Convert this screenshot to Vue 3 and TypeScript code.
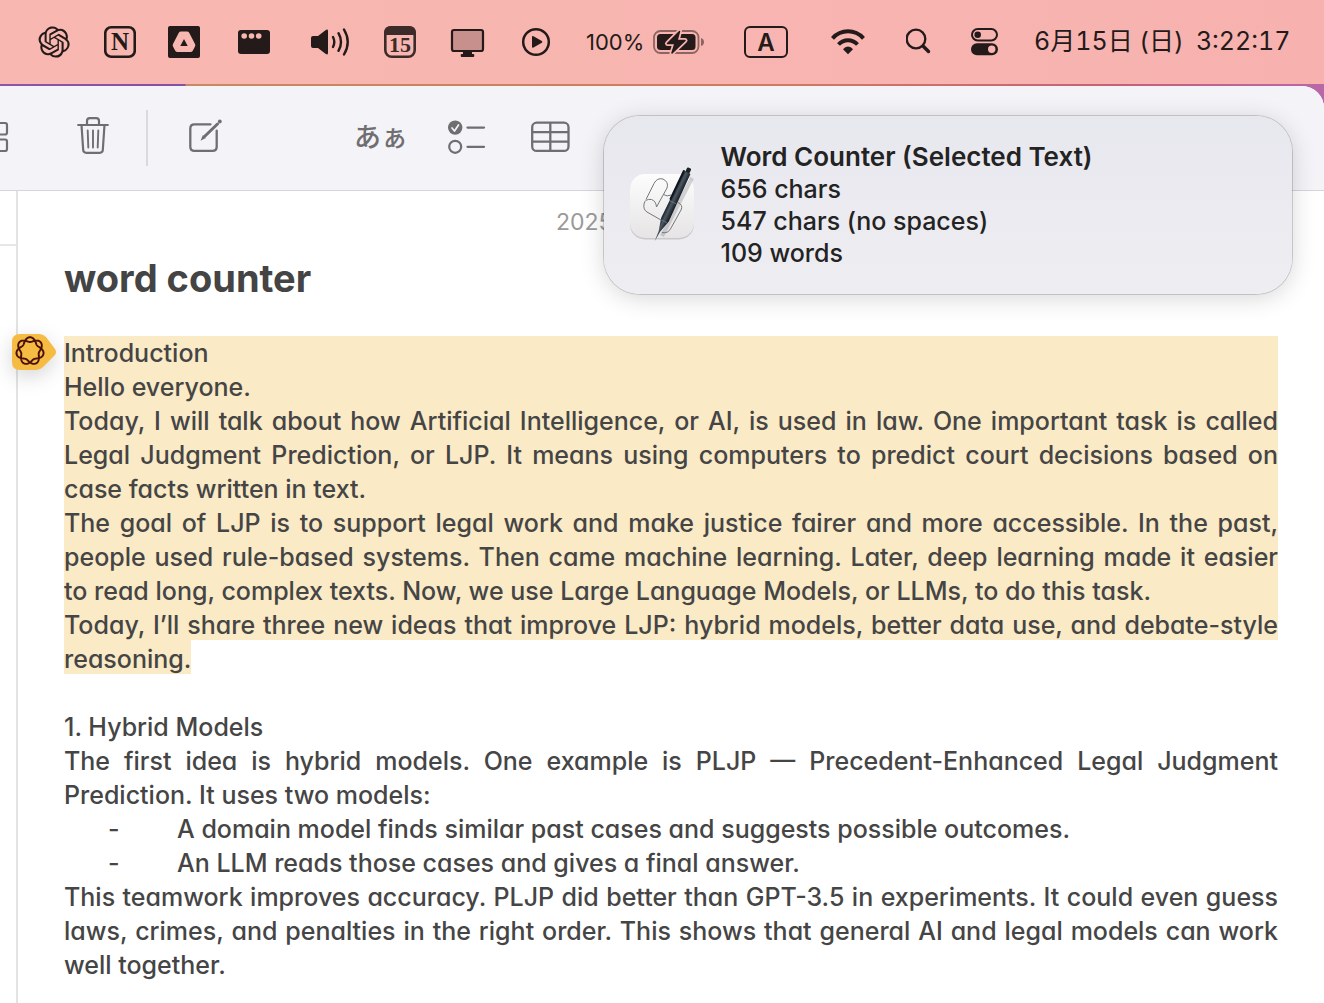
<script setup lang="ts">
interface Stat {
  value: number
  unit: string
}

const stats: Stat[] = [
  { value: 656, unit: 'chars' },
  { value: 547, unit: 'chars (no spaces)' },
  { value: 109, unit: 'words' },
]

const intro: string[] = [
  'Introduction',
  'Hello everyone.',
  'Today, I will talk about how Artificial Intelligence, or AI, is used in law. One important task is called Legal Judgment Prediction, or LJP. It means using computers to predict court decisions based on case facts written in text.',
  'The goal of LJP is to support legal work and make justice fairer and more accessible. In the past, people used rule-based systems. Then came machine learning. Later, deep learning made it easier to\u00a0read long, complex texts. Now, we use Large Language Models, or LLMs, to do this task.',
]

const points: string[] = [
  'A domain model finds similar past cases and suggests possible outcomes.',
  'An LLM reads those cases and gives a final answer.',
]

// Seven-lobed closed curve that winds twice round its centre.
function rosette(cx: number, cy: number, base: number, swing: number): string {
  const steps = 280
  const pts: string[] = []
  for (let i = 0; i < steps; i++) {
    const t = (i / steps) * Math.PI * 4
    const r = base + swing * Math.cos(3.5 * t)
    pts.push(`${(cx + r * Math.sin(t)).toFixed(2)} ${(cy - r * Math.cos(t)).toFixed(2)}`)
  }
  return `M${pts.join('L')}Z`
}

const rosettePath = rosette(18, 17, 11.4, 2.4)
</script>

<template>
  <div class="desktop">
    <header class="menubar">
      <button type="button" aria-label="ChatGPT">
        <svg width="34" height="36" viewBox="38 24 34 36">
          <g transform="translate(38.5 26.4) scale(1.3)">
            <path fill="#231a19" d="M22.2819 9.8211a5.9847 5.9847 0 0 0-.5157-4.9108 6.0462 6.0462 0 0 0-6.5098-2.9A6.0651 6.0651 0 0 0 4.9807 4.1818a5.9847 5.9847 0 0 0-3.9977 2.9 6.0462 6.0462 0 0 0 .7427 7.0966 5.98 5.98 0 0 0 .511 4.9107 6.051 6.051 0 0 0 6.5146 2.9001A5.9847 5.9847 0 0 0 13.2599 24a6.0557 6.0557 0 0 0 5.7718-4.2058 5.9894 5.9894 0 0 0 3.9977-2.9001 6.0557 6.0557 0 0 0-.7475-7.0729zm-9.022 12.6081a4.4755 4.4755 0 0 1-2.8764-1.0408l.1419-.0804 4.7783-2.7582a.7948.7948 0 0 0 .3927-.6813v-6.7369l2.02 1.1686a.071.071 0 0 1 .038.0521v5.5826a4.504 4.504 0 0 1-4.4945 4.4944zm-9.6607-4.1254a4.4708 4.4708 0 0 1-.5346-3.0137l.142.0852 4.783 2.7582a.7712.7712 0 0 0 .7806 0l5.8428-3.3685v2.3324a.0804.0804 0 0 1-.0332.0615L9.74 19.9502a4.4992 4.4992 0 0 1-6.1408-1.6464zM2.3408 7.8956a4.485 4.485 0 0 1 2.3655-1.9728V11.6a.7664.7664 0 0 0 .3879.6765l5.8144 3.3543-2.0201 1.1685a.0757.0757 0 0 1-.071 0l-4.8303-2.7865A4.504 4.504 0 0 1 2.3408 7.872zm16.5963 3.8558L13.1038 8.364 15.1192 7.2a.0757.0757 0 0 1 .071 0l4.8303 2.7913a4.4944 4.4944 0 0 1-.6765 8.1042v-5.6772a.79.79 0 0 0-.407-.667zm2.0107-3.0231l-.142-.0852-4.7735-2.7818a.7759.7759 0 0 0-.7854 0L9.409 9.2297V6.8974a.0662.0662 0 0 1 .0284-.0615l4.8303-2.7866a4.4992 4.4992 0 0 1 6.6802 4.66zM8.3065 12.863l-2.02-1.1638a.0804.0804 0 0 1-.038-.0567V6.0742a4.4992 4.4992 0 0 1 7.3757-3.4537l-.142.0805L8.704 5.459a.7948.7948 0 0 0-.3927.6813zm1.0976-2.3654l2.602-1.4998 2.6069 1.4998v2.9994l-2.5974 1.4997-2.6067-1.4997Z" />
          </g>
        </svg>
      </button>
      <button type="button" aria-label="Notion">
        <svg width="32" height="36" viewBox="104 24 32 36">
          <rect x="105.25" y="27.25" width="29.5" height="29.5" rx="6" fill="none" stroke="#231a19" stroke-width="2.6" />
          <text class="serif" x="120" y="50" font-size="25" text-anchor="middle" fill="#231a19">N</text>
        </svg>
      </button>
      <button type="button" aria-label="Google Drive">
        <svg width="32" height="36" viewBox="168 24 32 36">
          <path fill="#231a19" fill-rule="evenodd" d="M170 26h28a2 2 0 0 1 2 2v28a2 2 0 0 1-2 2h-28a2 2 0 0 1-2-2v-28a2 2 0 0 1 2-2ZM181 31.500h6q1.500 0 2.200 1.200L195 44q.6 1.200 0 2.400L192.600 51q-.7 1-2 1H177.400q-1.300 0-2-1L173 46.400q-.6-1.200 0-2.400L178.800 32.700q.7-1.200 2.200-1.200ZM184 39L180.300 46L187.700 46Z" />
        </svg>
      </button>
      <button type="button" aria-label="Window strip">
        <svg width="44" height="36" viewBox="232 24 44 36">
          <rect x="238" y="30" width="32" height="24" rx="3" fill="#231a19" />
          <circle cx="244.200" cy="36" r="2.800" fill="#f8b6b0" />
          <circle cx="251.500" cy="36" r="2.800" fill="#f8b6b0" />
          <circle cx="258.700" cy="36" r="2.800" fill="#f8b6b0" />
        </svg>
      </button>
      <button type="button" aria-label="Volume">
        <svg width="44" height="36" viewBox="308 24 44 36">
          <path fill="#231a19" d="M313 36h5l7.500-5.800q2.500-1.500 2.500.8v22q0 2.300-2.500.8L318 48h-5q-2 0-2-2v-8q0-2 2-2Z" />
          <g fill="none" stroke="#231a19" stroke-width="2.400" stroke-linecap="round">
            <path d="M333 37q2.600 5 0 10M338.500 33.200q5 8.800 0 17.600M344 29.500q7.500 12.500 0 25" />
          </g>
        </svg>
      </button>
      <button type="button" aria-label="Calendar">
        <svg width="32" height="36" viewBox="384 24 32 36">
          <rect x="385.300" y="27.300" width="29.400" height="29.400" rx="6.500" fill="none" stroke="#3c2b29" stroke-width="2.600" />
          <path fill="#3c2b29" d="M384 35v-2q0-7 7-7h18q7 0 7 7v2Z" />
          <text class="serif" x="400" y="52" font-size="22" text-anchor="middle" fill="#3c2b29">15</text>
        </svg>
      </button>
      <button type="button" aria-label="Display">
        <svg width="38" height="36" viewBox="448 24 38 36">
          <rect x="452" y="30" width="31" height="21" rx="2" fill="#c7908c" stroke="#231a19" stroke-width="2.200" />
          <path fill="#231a19" d="M463 51h9v3h1.500q.8.300.8 1.500t-.8 1.500h-12q-.8-.3-.8-1.500t.8-1.500h1.500Z" />
        </svg>
      </button>
      <button type="button" aria-label="Now playing">
        <svg width="36" height="36" viewBox="518 24 36 36">
          <circle cx="536" cy="42" r="12.800" fill="none" stroke="#231a19" stroke-width="2.500" />
          <path fill="#231a19" d="M532 37q0-1.500 1.500-.8l8.300 4.800q1.300.9 0 1.800l-8.300 4.800q-1.500.7-1.500-.8Z" />
        </svg>
      </button>
      <button type="button" class="battery" aria-label="Battery 100%">
        <span>100%</span>
        <svg width="52" height="36" viewBox="653 24 52 36">
          <rect x="654" y="31" width="44.500" height="22" rx="6.500" fill="none" stroke="#8e6461" stroke-width="1.800" />
          <rect x="657" y="34" width="38.500" height="16" rx="3.500" fill="#231a19" />
          <path fill="#8e6461" d="M701 38q3 1 3 4t-3 4Z" />
          <path d="M679.500 31.500L667.500 43.500L675 43.500L672 53L685 40.500L677 40.500Z" fill="#231a19" stroke="#f8b5b0" stroke-width="5" stroke-linejoin="round" />
          <path d="M679.500 31.500L667.500 43.500L675 43.500L672 53L685 40.500L677 40.500Z" fill="#231a19" stroke="#231a19" stroke-width="1.500" stroke-linejoin="round" />
        </svg>
      </button>
      <button type="button" aria-label="Input source">
        <svg width="44" height="36" viewBox="744 24 44 36">
          <rect x="745" y="27" width="42" height="30" rx="5" fill="none" stroke="#231a19" stroke-width="2" />
          <text class="sans" x="766" y="51" font-size="24" text-anchor="middle" fill="#231a19">A</text>
        </svg>
      </button>
      <button type="button" aria-label="Wi-Fi">
        <svg width="54" height="36" viewBox="820 24 54 36">
          <g fill="none" stroke="#231a19" stroke-width="4">
            <path d="M832.500 38.300q6.500-7 15.500-7t15.500 7" />
            <path d="M838.500 44.500q4-4.300 9.500-4.300t9.500 4.300" />
          </g>
          <path fill="#231a19" d="M848 54.200l-5-5q2-2.600 5-2.600t5 2.600Z" />
        </svg>
      </button>
      <button type="button" aria-label="Search">
        <svg width="26" height="36" viewBox="906 24 26 36">
          <circle cx="916" cy="39" r="9.300" fill="none" stroke="#231a19" stroke-width="2.300" />
          <path d="M923 46L928.500 51.500" stroke="#231a19" stroke-width="3.400" stroke-linecap="round" />
        </svg>
      </button>
      <button type="button" aria-label="Control Center">
        <svg width="38" height="36" viewBox="964 24 38 36">
          <rect x="972" y="29" width="25" height="11.500" rx="5.700" fill="none" stroke="#231a19" stroke-width="2" />
          <circle cx="977.700" cy="34.700" r="3.300" fill="#231a19" />
          <rect x="971" y="43.200" width="27" height="12" rx="6" fill="#231a19" />
          <circle cx="991.700" cy="49.200" r="3.700" fill="#f8b4b0" />
        </svg>
      </button>
      <time class="clock"><span>6月15日 (日)</span><span>3:22:17</span></time>
    </header>

    <div class="window">
      <div class="toolbar">
        <div class="tools tools-left">
          <button type="button" aria-label="Gallery view">
            <svg width="10" height="56" viewBox="0 110 10 56">
              <g fill="none" stroke="#6f6e70" stroke-width="2.200">
                <rect x="-8" y="123" width="15" height="11.500" rx="2" />
                <rect x="-8" y="139.500" width="15" height="11.500" rx="2" />
              </g>
            </svg>
          </button>
          <button type="button" aria-label="Delete">
            <svg width="38" height="56" viewBox="74 110 38 56">
              <g fill="none" stroke="#6f6e70" stroke-width="2.200" stroke-linecap="round" stroke-linejoin="round">
                <path d="M78.200 125h29.600M87 124.500v-3.500q0-2.800 2.800-2.800h6.400q2.800 0 2.800 2.800v3.500" />
                <path d="M81.500 125l1.700 25q.2 2.800 3 2.800h13.600q2.800 0 3-2.800l1.700-25" />
                <path stroke-width="1.900" d="M87.700 130.500l.6 17M93 130.500v17M98.300 130.500l-.6 17" />
              </g>
            </svg>
          </button>
        </div>
        <span class="divider"></span>
        <button type="button" aria-label="New note">
          <svg width="40" height="56" viewBox="186 110 40 56">
            <g fill="none" stroke="#6f6e70" stroke-width="2.300" stroke-linecap="round">
              <path d="M210.500 124.300h-16q-4.200 0-4.200 4.200v18.200q0 4.200 4.200 4.200h18q4.200 0 4.200-4.200v-16" />
              <path d="M204.500 136.500l13-12.500" stroke-width="3" />
            </g>
            <path fill="#6f6e70" d="M200.500 140.700l2.400-5.700 3 3Z" />
            <circle cx="219.800" cy="121.500" r="1.900" fill="#6f6e70" />
          </svg>
        </button>
        <div class="tools tools-format">
          <button type="button" class="kana" aria-label="Text format">あぁ</button>
          <button type="button" aria-label="Checklist">
            <svg width="42" height="56" viewBox="446 110 42 56">
              <circle cx="455.200" cy="127.600" r="7.200" fill="#6f6e70" />
              <path d="M452 128l2.500 3 4-6" fill="none" stroke="#f4f3f8" stroke-width="1.700" stroke-linecap="round" stroke-linejoin="round" />
              <circle cx="455.200" cy="146.800" r="6" fill="none" stroke="#6f6e70" stroke-width="2.200" />
              <path d="M467.500 127.600h16.500M467.500 146.800h16.500" stroke="#6f6e70" stroke-width="2.300" stroke-linecap="round" />
            </svg>
          </button>
          <button type="button" aria-label="Table">
            <svg width="42" height="56" viewBox="530 110 42 56">
              <g fill="none" stroke="#6f6e70" stroke-width="2.300">
                <rect x="532.200" y="122.700" width="36.300" height="28.200" rx="4.500" />
                <path d="M550.300 122.700v28.200M532.200 132.200h36.300M532.200 141.700h36.300" />
              </g>
            </svg>
          </button>
        </div>
      </div>

      <div class="panes">
        <aside class="sidebar"><div class="sidebar-head"></div></aside>
        <main class="note">
          <p class="stamp">2025</p>
          <h1>word counter</h1>
          <div class="body">
            <button type="button" class="badge" aria-label="Writing tools">
              <svg width="44" height="36" viewBox="0 0 44 36">
                <path fill="#f5bb42" d="M8 0h19q4 0 7 3l9 12q2 3 0 6l-12 12q-3 3-7 3H8q-8 0-8-8V8q0-8 8-8Z" />
                <path :d="rosettePath" fill="none" stroke="#4a0f07" stroke-width="1.900" stroke-linejoin="round" />
              </svg>
            </button>
            <div class="selected">
              <p v-for="line in intro" :key="line">{{ line }}</p>
            </div>
            <p><mark>Today, I’ll share three new ideas that improve LJP: hybrid models, better data use, and debate-style reasoning.</mark></p>
            <h2>1. Hybrid Models</h2>
            <p>The first idea is hybrid models. One example is PLJP — Precedent-Enhanced Legal Judgment Prediction. It uses two models:</p>
            <ul>
              <li v-for="point in points" :key="point"><span>-</span><span>{{ point }}</span></li>
            </ul>
            <p>This teamwork improves accuracy. PLJP did better than GPT-3.5 in experiments. It could even guess laws, crimes, and penalties in the right order. This shows that general AI and legal models can work well together.</p>
          </div>
        </main>
      </div>
    </div>

    <section class="notification" role="status">
      <svg width="68" height="80" viewBox="628 164 68 80">
        <defs>
          <linearGradient id="tile" x1="0" y1="0" x2="0" y2="1">
            <stop offset="0" stop-color="#fdfdfd" />
            <stop offset="1" stop-color="#e6e4e5" />
          </linearGradient>
          <linearGradient id="barrel" x1="0" y1="0" x2="1" y2="0">
            <stop offset="0" stop-color="#17202a" />
            <stop offset="0.400" stop-color="#4c5863" />
            <stop offset="1" stop-color="#12171d" />
          </linearGradient>
        </defs>
        <rect x="630" y="174.500" width="64" height="64" rx="15" fill="#c9c8cb" />
        <rect x="630" y="173" width="64" height="64" rx="15" fill="url(#tile)" />
        <g fill="none" stroke="#77777a" stroke-width="1">
          <path d="M646 198.500L654 182.500Q657 176.500 663 178Q669 181 667 187L656.500 206Q656 200 651.500 198.500Q645 197.500 644 203Q643 208.500 647 211L661 219" />
          <path d="M663.500 193.500Q667 196 671 194M678 201.500Q683.500 204 681 209L671 227Q668 233 662 231.500" />
        </g>
        <path d="M692 177L662 235" stroke="#77777a" stroke-opacity="0.300" stroke-width="4" />
        <g transform="translate(689 168) rotate(25.500)">
          <rect x="-2.200" y="-1" width="4.400" height="7" rx="1" fill="#1b222a" />
          <path d="M-3.500 4h7l.8 52-3.400 13-.8 11-.8-11-3.400-13Z" fill="url(#barrel)" />
          <path d="M-3.800 4v31" stroke="#10161d" stroke-width="2" stroke-linecap="round" />
          <path d="M-3.500 37h7M-3.300 58h6.600" stroke="#8a949e" stroke-width="0.500" />
        </g>
      </svg>
      <div class="message">
        <strong>Word Counter (Selected Text)</strong>
        <span v-for="stat in stats" :key="stat.unit">{{ stat.value }} {{ stat.unit }}</span>
      </div>
    </section>
  </div>
</template>

<style>
body {
  margin: 0;
  background: #fff;
}
</style>

<style scoped>
.desktop {
  position: relative;
  display: flex;
  flex-direction: column;
  min-height: 100vh;
  overflow: hidden;
  font-family: Inter, "Noto Sans CJK JP", sans-serif;
  font-size: 25px;
  color: #454545;
  background: linear-gradient(90deg, #8a55ab 0, #8450a8 185px, #c88a60 186px, #d07a60 60%, #c4607a 85%, #b868a8 100%);
}

button {
  display: flex;
  flex: none;
  align-items: center;
  margin: 0;
  padding: 0;
  border: 0;
  background: none;
  font: inherit;
  color: inherit;
}

svg {
  display: block;
  flex: none;
}

.serif {
  font-family: "Liberation Serif", serif;
  font-weight: 700;
}

.sans {
  font-family: Inter, sans-serif;
  font-weight: 600;
}

.menubar {
  display: flex;
  align-items: center;
  gap: 32px;
  box-sizing: border-box;
  height: 84px;
  padding-left: 38px;
  color: #231a19;
  background: linear-gradient(90deg, #f8b8b1, #f7b2b0);
}

.battery {
  gap: 8px;
  width: 126px;
  font-size: 22px;
}

.battery svg {
  margin-left: auto;
  margin-right: 7px;
}

.clock {
  display: flex;
  align-items: baseline;
  gap: 12px;
  padding-bottom: 2px;
  font-variant-numeric: tabular-nums;
  line-height: 32px;
  white-space: nowrap;
}

.window {
  flex: 1;
  display: flex;
  flex-direction: column;
  margin-top: 2px;
  border-top-right-radius: 22px;
  overflow: hidden;
  background: #fff;
}

.toolbar {
  display: flex;
  align-items: center;
  box-sizing: border-box;
  height: 105px;
  border-bottom: 1px solid #d6d5d9;
  color: #6f6e70;
  background: #f4f3f8;
}

.tools {
  display: flex;
  align-items: center;
}

.tools-left {
  gap: 64px;
}

.divider {
  width: 2px;
  height: 56px;
  margin: 0 38px 0 34px;
  background: #dad9de;
}

.tools-format {
  gap: 42px;
  margin-left: 128px;
}

.kana {
  width: 50px;
  padding-bottom: 4px;
  font-family: "Noto Sans CJK JP", sans-serif;
  font-size: 27px;
  font-weight: 500;
  line-height: 40px;
  white-space: nowrap;
}

.panes {
  flex: 1;
  display: flex;
}

.sidebar {
  flex: none;
  width: 16px;
  border-right: 2px solid #e3e3e3;
}

.sidebar-head {
  height: 53px;
  border-bottom: 2px solid #e6e6e6;
}

.note {
  flex: 1;
  padding: 14px 46px 20px;
}

.stamp {
  margin: 0;
  padding-left: 492px;
  font-size: 23px;
  line-height: 34px;
  color: #9a9a9a;
}

h1 {
  margin: 14px 0 33px;
  font-size: 38px;
  font-weight: 700;
  line-height: 50px;
  color: #444;
}

.body {
  position: relative;
  font-weight: 450;
  line-height: 34px;
  text-align: justify;
  font-feature-settings: "cv11";
}

.body p,
.body ul {
  margin: 0;
  padding: 0;
}

.selected,
mark {
  color: inherit;
  background: #faeac5;
}

mark {
  padding: 4px 0 0;
}

h2 {
  margin: 34px 0 0;
  font-size: 25px;
  font-weight: 450;
  line-height: 34px;
}

li {
  display: flex;
  padding-left: 44px;
  list-style: none;
}

li span:first-child {
  width: 69px;
}

.badge {
  position: absolute;
  top: -2px;
  left: -52px;
  filter: drop-shadow(0 6px 10px rgba(0, 0, 0, 0.16));
}

.notification {
  position: absolute;
  top: 116px;
  right: 32px;
  display: flex;
  align-items: center;
  gap: 25px;
  box-sizing: border-box;
  width: 52%;
  padding: 25px 24px;
  border-radius: 36px;
  color: #232323;
  background: linear-gradient(180deg, #e7e8ee, #eeedf2);
  box-shadow: 0 0 0 1px rgba(0, 0, 0, 0.16), 0 4px 24px rgba(0, 0, 0, 0.16);
}

.message {
  display: flex;
  flex-direction: column;
  font-weight: 450;
  line-height: 32px;
}

.message strong {
  font-size: 26px;
  font-weight: 600;
}
</style>
